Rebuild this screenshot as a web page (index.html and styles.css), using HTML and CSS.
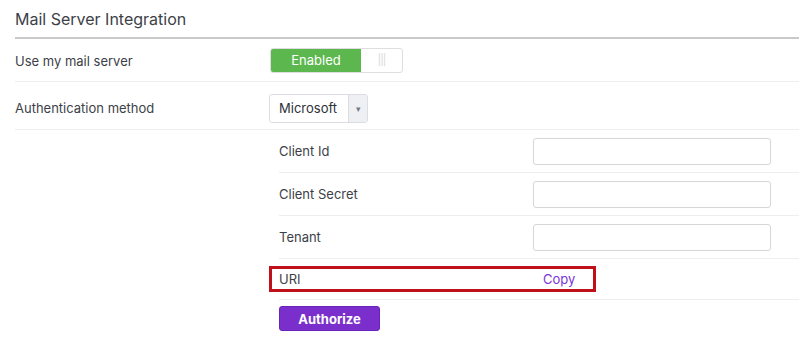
FILE: index.html
```html
<!DOCTYPE html>
<html lang="en">
<head>
    <meta charset="UTF-8">
    <title>Mail Server Integration</title>
    <link rel="stylesheet" href="styles.css">
</head>
<body>
    <div class="settings">
        <div class="section-title">Mail Server Integration</div>

        <div class="row">
            <div class="row-label">Use my mail server</div>
            <div class="row-value">
                <div class="toggle">
                    <span class="toggle-on">Enabled</span>
                    <span class="toggle-grip">|||</span>
                </div>
            </div>
        </div>

        <div class="row row-tall">
            <div class="row-label">Authentication method</div>
            <div class="row-value">
                <div class="select">
                    <span class="select-text">Microsoft</span>
                    <span class="select-arrow">&#9662;</span>
                </div>
            </div>
        </div>

        <div class="sub-section">
            <div class="sub-row">
                <div class="sub-label">Client Id</div>
                <input class="text-input" type="text">
            </div>
            <div class="sub-row">
                <div class="sub-label">Client Secret</div>
                <input class="text-input" type="text">
            </div>
            <div class="sub-row">
                <div class="sub-label">Tenant</div>
                <input class="text-input" type="text">
            </div>
            <div class="sub-row uri-row">
                <div class="uri-box">
                    <div class="sub-label">URI</div>
                    <a class="copy-link" href="#">Copy</a>
                </div>
            </div>
            <div class="sub-row action-row">
                <button class="authorize-button">Authorize</button>
            </div>
        </div>
    </div>
</body>
</html>
```

FILE: styles.css
```css
body {
    margin: 0;
    font-family: Inter, "Noto Sans", sans-serif;
    font-size: 13px;
    color: #3d3f48;
    background: #fff;
}

.settings {
    padding-left: 15px;
}

.section-title {
    height: 37px;
    line-height: 39px;
    font-size: 16px;
    border-bottom: 2px solid #c9c9c9;
}

.row {
    display: flex;
    align-items: center;
    height: 41px;
    padding-top: 1px;
    border-bottom: 1px solid #eeeeee;
}

.row-tall {
    height: 42px;
    padding-top: 5px;
}

.row-label {
    width: 254px;
}

.toggle {
    display: flex;
    width: 131px;
    height: 23px;
    border: 1px solid #dedede;
    border-radius: 3px;
    overflow: hidden;
    margin-left: 1px;
}

.toggle-on {
    width: 90px;
    background: #5cb84e;
    color: #fff;
    font-size: 13px;
    text-align: center;
    line-height: 23px;
}

.toggle-grip {
    flex: 1;
    text-align: center;
    color: #d8d8d8;
    font-size: 11px;
    line-height: 23px;
    letter-spacing: -1px;
}

.select {
    display: flex;
    width: 97px;
    height: 27px;
    border: 1px solid #dcdde2;
    border-radius: 3px;
    overflow: hidden;
}

.select-text {
    flex: 1;
    padding-left: 9px;
    line-height: 27px;
    color: #2e3038;
}

.select-arrow {
    width: 18px;
    background: #eff0f4;
    border-left: 1px solid #dcdde2;
    color: #7a7c85;
    font-size: 9px;
    text-align: center;
    line-height: 27px;
}

.sub-section {
    margin-left: 254px;
}

.sub-row {
    display: flex;
    align-items: center;
    height: 42px;
    margin-left: 10px;
    border-bottom: 1px solid #eeeeee;
}

.sub-label {
    width: 254px;
}

.text-input {
    width: 236px;
    height: 25px;
    border: 1px solid #d6d6d6;
    border-radius: 3px;
    padding: 0;
    margin: 0;
}

.uri-row {
    height: 40px;
}

.uri-box {
    display: flex;
    align-items: center;
    width: 314px;
    height: 20px;
    margin-left: -10px;
    padding-left: 7px;
    border: 3px solid #c0111a;
}

.copy-link {
    margin-left: 10px;
    color: #7a35d6;
    text-decoration: none;
}

.action-row {
    border-bottom: none;
    align-items: flex-start;
    padding-top: 6px;
    height: 34px;
}

.authorize-button {
    width: 101px;
    height: 25px;
    background: #7a2fcc;
    color: #fff;
    border: 1px solid #6a22b8;
    border-radius: 3px;
    font-family: Inter, "Noto Sans", sans-serif;
    font-size: 13px;
    font-weight: 700;
    cursor: pointer;
}
```
